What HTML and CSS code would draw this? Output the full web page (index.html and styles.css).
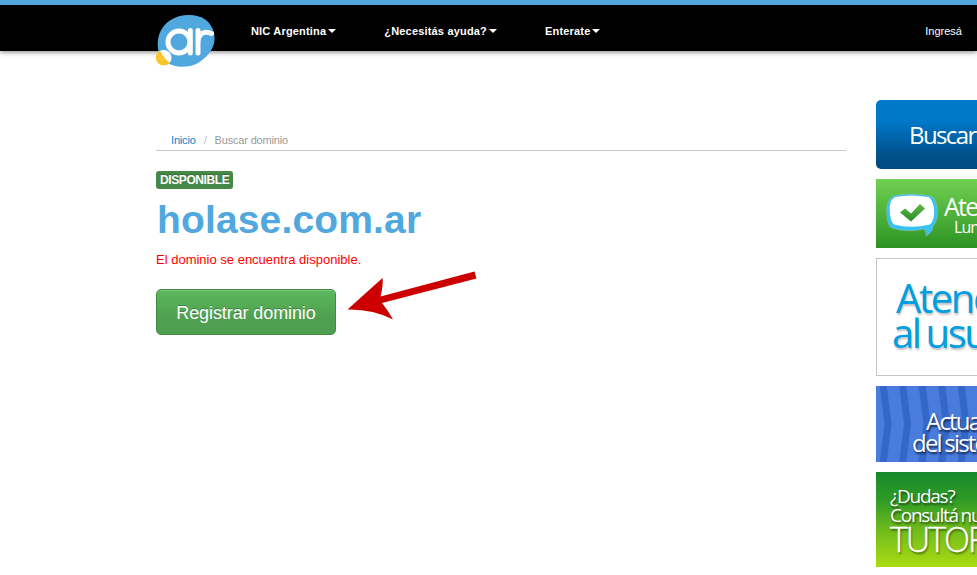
FILE: index.html
```html
<!DOCTYPE html>
<html lang="es">
<head>
<meta charset="utf-8">
<title>Buscar dominio - NIC Argentina</title>
<link rel="stylesheet" href="styles.css">
</head>
<body>
<header class="topbar">
  <a class="logo" href="#" aria-label="NIC Argentina">
    <svg width="62" height="56" viewBox="0 0 62 56">
      <path d="M34 2C47 2 56 8 59 20C62 33 53 44 43 50C33 55.500 19 55 11 49C3 43 1 33 4 22C8 9 20 2 34 2Z" fill="#50a8de"/>
      <circle cx="8.700" cy="44.700" r="7.800" fill="#fff"/>
      <path d="M5 37.800C8 42 10.500 48 15 49.300C11 55 2 52.500 1 46C.6 42 2 39 5 37.800Z" fill="#fbc52c"/>
      <g fill="none" stroke="#fff" stroke-width="5" stroke-linecap="round">
        <circle cx="24" cy="29" r="11"/>
        <path d="M35.300 17.500V40M43 17.500V40M43 30C43 21 49 17 56.500 20.500"/>
      </g>
    </svg>
  </a>
  <nav class="menu">
    <a href="#">NIC Argentina<i class="caret"></i></a>
    <a href="#">¿Necesitás ayuda?<i class="caret"></i></a>
    <a href="#">Enterate<i class="caret"></i></a>
  </nav>
  <a class="login" href="#">Ingresá</a>
</header>
<div class="page">
  <main class="main">
    <div class="crumbs"><a href="#">Inicio</a><span class="sep">/</span><span>Buscar dominio</span></div>
    <span class="label">DISPONIBLE</span>
    <h1>holase.com.ar</h1>
    <p class="status">El dominio se encuentra disponible.</p>
    <div class="action">
      <button class="register">Registrar dominio</button>
      <svg class="arrow" width="130" height="50" viewBox="0 0 130 50">
        <path d="M-.5 39.500L34.500 8Q35.500 14 32.500 26.500L126.500 1.500L128.500 8.500L34 33Q40.500 41 45 49.500Q25 39 -.5 39.500Z" fill="#c00"/>
      </svg>
    </div>
  </main>
  <aside class="banners">
    <a class="banner search" href="#">Buscar dominio</a>
    <a class="banner hours" href="#">
      <svg width="54" height="44" viewBox="0 0 54 44">
        <defs><linearGradient id="check" x1="0" y1="0" x2="0" y2="1"><stop stop-color="#62b847"/><stop offset="1" stop-color="#268d24"/></linearGradient></defs>
        <path d="M8 3Q26 -1 45 3Q50 4 52 14Q54 27 48 33Q48 39 41 43Q42 39 39 36Q22 40 7 35Q3 34 2 23Q0 9 8 3Z" fill="#36c2f2" stroke="#9ba" stroke-width=".6"/>
        <path d="M10 4Q26 1 43 4Q47 5 49 15Q50 27 45 31.500Q26 36 9 31.500Q6 30 5 21Q3 8 10 4Z" fill="#fff"/>
        <path d="M15 19.500L20 15.500L26 20.500L35 11L40 15.500L26 28.500Z" fill="url(#check)"/>
      </svg>
      <span class="hours-text"><b>Atención</b><small>Lunes a viernes</small></span>
    </a>
    <a class="banner support" href="#"><span>Atención</span><span class="second">al usuario</span></a>
    <a class="banner update" href="#">
      <svg class="stripes" width="101" height="76" viewBox="0 0 101 76">
        <g fill="none" stroke="#3467ca" stroke-width="7"><path d="M7 -2L12 38L7 78M26.500 -2L31.500 38L26.500 78M46 -2L51 38L46 78M65.500 -2L70.500 38L65.500 78M85 -2L90 38L85 78"/></g>
      </svg>
      <span>Actualización</span><span class="second">del sistema</span>
    </a>
    <a class="banner tutorials" href="#"><span>¿Dudas?</span><span class="ask">Consultá nuestros</span><span class="big">TUTORIALES</span></a>
  </aside>
</div>
</body>
</html>
```
FILE: styles.css
```css
body {
  margin: 0;
  height: 575px;
  overflow: hidden;
  background: #fff;
  font-family: "Liberation Sans", Arial, sans-serif;
}
a { text-decoration: none; }
.topbar {
  position: relative;
  display: flex;
  align-items: center;
  box-sizing: border-box;
  height: 51px;
  padding: 5px 15px 0 251px;
  border-top: 5px solid #50a8de;
  background: #000;
  box-shadow: 0 1px 5px rgba(0, 0, 0, .5);
  font-size: 11px;
  line-height: 14px;
}
.logo { position: absolute; left: 155px; top: 8px; }
.logo svg { display: block; }
.menu { display: flex; gap: 48px; font-weight: bold; letter-spacing: .18px; }
.menu a { display: flex; align-items: center; color: #fff; white-space: nowrap; }
.caret {
  margin: 0 0 0 2px;
  border: 4px solid transparent;
  border-top-color: #fff;
  border-bottom: 0;
}
.login { margin-left: auto; color: #fff; }
.page { display: flex; gap: 30px; padding: 49px 0 0 156px; }
.main { flex: 0 0 690px; padding-top: 33px; }
.crumbs {
  display: flex;
  gap: 8px;
  padding: 0 15px 3px;
  border-bottom: 1px solid #c8c8c8;
  color: #999;
  font-size: 11px;
  line-height: 14px;
  letter-spacing: -.17px;
}
.crumbs a { color: #0088cc; }
.crumbs .sep { color: #bbb; }
.label {
  display: block;
  width: 69px;
  height: 18px;
  margin-top: 20px;
  padding: 0 4px;
  border-radius: 3px;
  background: #468847;
  color: #fff;
  font-size: 12px;
  font-weight: bold;
  line-height: 19px;
  letter-spacing: -.4px;
  text-shadow: 0 -1px 0 rgba(0, 0, 0, .25);
}
h1 {
  margin: 11px 0 0 1px;
  color: #50a8de;
  font-size: 39px;
  line-height: 40px;
  letter-spacing: .15px;
}
.status {
  margin: 10px 0 0;
  color: #f00;
  font-size: 13px;
  line-height: 20px;
}
.action { display: flex; align-items: flex-start; gap: 12px; margin-top: 19px; }
.register {
  flex: 0 0 180px;
  box-sizing: border-box;
  height: 46px;
  padding: 2px 0 0;
  border: 1px solid #3f8c41;
  border-radius: 5px;
  background: linear-gradient(#5db85d, #4f9f50 65%);
  box-shadow: inset 0 1px 0 rgba(255, 255, 255, .2);
  color: #fff;
  font: 18px "Liberation Sans", Arial, sans-serif;
  letter-spacing: -.1px;
  text-shadow: 0 -1px 0 rgba(0, 0, 0, .25);
}
.arrow { margin-top: -19px; overflow: visible; }
.banners {
  flex: 0 0 101px;
  display: flex;
  flex-direction: column;
  gap: 10px;
  overflow: hidden;
  font-family: "Open Sans", "Noto Sans", sans-serif;
  font-weight: 400;
}
.banner {
  position: relative;
  box-sizing: border-box;
  overflow: hidden;
  color: #fff;
  white-space: nowrap;
}
.banner span { display: block; }
.search {
  height: 69px;
  padding-left: 33px;
  border-radius: 5px 0 0 5px;
  background: linear-gradient(#007acb 0, #0078c8 30%, #00508b 80%, #004a80);
  font-size: 24px;
  line-height: 69px;
  letter-spacing: -1.6px;
}
.hours {
  display: flex;
  height: 69px;
  padding: 14px 0 0 9px;
  background: linear-gradient(#72d052, #2c9323);
}
.hours svg { flex: none; }
.hours-text { margin-left: 5px; }
.hours b { display: block; margin-top: -1px; font-size: 25px; font-weight: 400; line-height: 28px; letter-spacing: -1.7px; }
.hours small { display: block; margin-left: 10px; font-size: 16px; line-height: 14px; letter-spacing: -.9px; }
.support {
  height: 118px;
  padding: 19px 0 0 19px;
  border: 1px solid #c5c5c5;
  border-right: 0;
  color: #009ee3;
  font-size: 40px;
  line-height: 40px;
  letter-spacing: -2.4px;
  word-spacing: -2px;
  text-shadow: 1px 2px 2px rgba(0, 0, 0, .25);
}
.support .second { margin: -5px 0 0 -4px; }
.update {
  height: 76px;
  padding: 23px 0 0 50px;
  background: #4a7cdd;
  font-size: 24px;
  line-height: 24px;
  letter-spacing: -1.8px;
  word-spacing: -1px;
  text-shadow: 1px 2px 2px #12244c;
}
.update span { position: relative; }
.update .second { margin: -2px 0 0 -14px; }
.stripes { position: absolute; left: 0; top: 0; }
.tutorials {
  height: 95px;
  padding: 13px 0 0 14px;
  background: linear-gradient(#168a2b, #309b26 30%, #6eba1c 60%, #aadc12);
  font-size: 19px;
  line-height: 22px;
  letter-spacing: -1.25px;
  word-spacing: -1px;
  text-shadow: 1px 2px 2px rgba(0, 0, 0, .5);
}
.tutorials .ask { margin-top: -3px; }
.tutorials .big {
  margin-top: 3px;
  font-size: 34px;
  font-weight: 300;
  line-height: 20px;
  letter-spacing: -2px;
  -webkit-text-stroke: .4px #fff;
}
```
